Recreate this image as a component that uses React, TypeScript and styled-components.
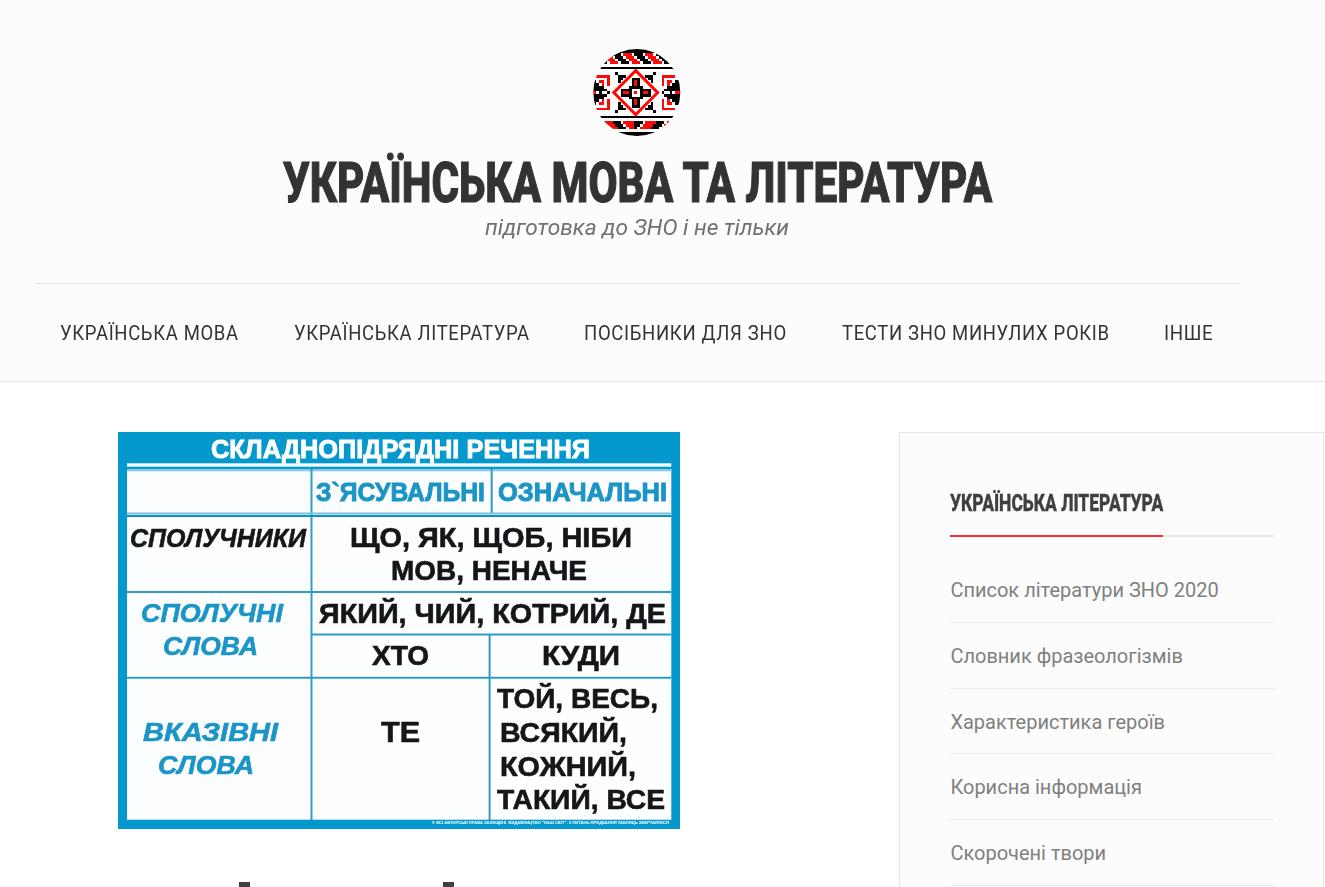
import React, { useLayoutEffect, useRef, useState } from 'react';
import styled, { createGlobalStyle } from 'styled-components';

const Global = createGlobalStyle`
  * { box-sizing: border-box; }
  body { margin: 0; background: #fff; font-family: Roboto, sans-serif; overflow: hidden; }
`;
const Page = styled.div`height: 887px; overflow: hidden;`;
const Header = styled.header`
  height: 382px; background: #fcfcfc; border-bottom: 1px solid #e6e6e6;
  padding: 49px 86px 0 35px;
`;
const Brand = styled.div`
  height: 234px; display: flex; flex-direction: column; align-items: center;
`;
const Emblem = styled.svg`display: block; width: 88px; height: 87px; flex: none;`;
const SiteTitle = styled.h1`
  margin: 15px 0 0; color: #333; font-size: 56px; line-height: 64px; font-weight: 800;
  -webkit-text-stroke: 1.2px #333;
`;
const Tagline = styled.p`
  margin: 0; font-size: 22.6px; line-height: 26px; font-style: italic; color: #707070;
`;
const Nav = styled.nav`
  border-top: 1px solid #e6e6e6; height: 98px; padding: 2px 25.5px 0 25px;
  display: flex; justify-content: space-between; align-items: center;
`;
const NavLink = styled.a`color: #333; font-size: 19.7px; line-height: 24px; letter-spacing: 0.7px;`;
const Columns = styled.main`
  display: flex; justify-content: space-between; align-items: flex-start;
  padding: 50px 1px 0 118px;
`;
const Article = styled.article`width: 562px;`;
const Poster = styled.svg`display: block; width: 562px; height: 397px;`;
const Accents = styled.div`
  display: flex; gap: 193px; padding: 53px 0 0 121px;
`;
const Accent = styled.span`width: 11px; height: 12px; background: #404040;`;
const Sidebar = styled.aside`
  width: 425px; height: 560px; padding: 50px; background: #fcfcfc; border: 1px solid #e6e6e6;
`;
const WidgetTitle = styled.h2`
  margin: 0 0 20.4px; height: 54px; border-bottom: 2px solid #e6e6e6; color: #404040;
  font-size: 23.5px; line-height: 40px; font-weight: 800; display: flex;
  -webkit-text-stroke: 0.4px #404040;
`;
const Underlined = styled.span`height: 54px; border-bottom: 2px solid #ff2d2d;`;
const List = styled.ul`list-style: none; margin: 0; padding: 0;`;
const Item = styled.li`
  height: 65.7px; line-height: 66px; font-size: 20px; color: #808080;
  border-bottom: 1px dotted #dcdcdc; padding-left: 0.4px;
`;
const FitBox = styled.span`display: block; white-space: nowrap;`;
const FitInner = styled.span`display: inline-block; transform-origin: 0 50%;`;

/* Condenses a line of text to a fixed measure. */
function Fit({ width, children }: { width: number; children: React.ReactNode }) {
  const ref = useRef<HTMLSpanElement>(null);
  const [scale, setScale] = useState(1);
  useLayoutEffect(() => {
    if (ref.current) setScale(width / ref.current.offsetWidth);
  }, [width]);
  return (
    <FitBox style={{ width }}>
      <FitInner ref={ref} style={{ transform: `scaleX(${scale})` }}>{children}</FitInner>
    </FitBox>
  );
}

const RED = '#ff0808';
const BLACK = '#000';
const mod = (n: number, m: number) => ((n % m) + m) % m;

/* Colour of one cross-stitch of the embroidery, counted from the centre. */
function stitch(x: number, y: number): string | null {
  const u = Math.abs(x);
  const v = Math.abs(y);
  if (v >= 15) return BLACK;
  if (y >= -14 && y <= -11) {
    const k = mod(x - (y + 14) + 8, 8);
    return k < 3 ? BLACK : k > 3 && k < 7 ? RED : null;
  }
  if (y >= 11 && y <= 13) {
    const r = y - 11;
    const k = mod(x + 4 + (x < 0 ? -r : r), 8);
    if (k < 4) return RED;
    return k < 7 ? BLACK : null;
  }
  if (v === 9) return BLACK;
  if (v > 8) return null;
  if (u === 0 && v === 0) return RED;
  if (u <= 1 && v <= 1) return null;
  if ((u === 0 && v >= 3 && v <= 4) || (v === 0 && u >= 3 && u <= 4)) return RED;
  if ((u <= 1 && v <= 5) || (v <= 1 && u <= 5)) return BLACK;
  if (u === 2 && v === 2) return BLACK;
  if (u === 7 && v === 7) return BLACK;
  if (u >= 4 && u <= 6 && v >= 4 && v <= 6 && u + v >= 10) return BLACK;
  if (u < 10 || v > 6) return null;
  if (v === 0) return u === 10 || u === 13 ? BLACK : u >= 15 ? RED : null;
  if (v === 6) return u <= 14 ? RED : null;
  if (u === 10 && v >= 3) return RED;
  if (v === 4 && u >= 12 && u <= 13) return RED;
  if (u === 12 && v === 3) return RED;
  if (v === 1 && u >= 11) return BLACK;
  if (v === 2 && u >= 12) return BLACK;
  if (v === 3 && u >= 14) return BLACK;
  if (v === 4 && u >= 15) return BLACK;
  return null;
}

function Embroidery() {
  const cells: React.ReactNode[] = [];
  const c = 2.72;
  for (let y = -17; y <= 17; y++)
    for (let x = -17; x <= 17; x++) {
      const fill = stitch(x, y);
      if (fill)
        cells.push(<rect key={`${x},${y}`} x={42.7 + (x - 0.5) * c} y={43.6 + (y - 0.5) * c} width={c} height={c} fill={fill} />);
    }
  return (
    <Emblem viewBox="0 0 88 87">
      <clipPath id="disc"><circle cx="43.8" cy="43.5" r="43.5" /></clipPath>
      <g clipPath="url(#disc)">
        <rect width="88" height="87" fill="#fff" />
        <g shapeRendering="crispEdges">{cells}</g>
        <path d="M42.7 21.6L64.7 43.6L42.7 65.6L20.7 43.6Z" fill="none" stroke={RED} strokeWidth="2.9" />
      </g>
    </Emblem>
  );
}

const INK = '#15151a';
const BLUE = '#1b94c6';
type Word = [string, number, number, number, number, string, boolean?];
/* text, left, right, baseline, size, colour, italic */
const words: Word[] = [
  ['СКЛАДНОПІДРЯДНІ РЕЧЕННЯ', 211, 590, 458, 25.5, '#fff'],
  ['З`ЯСУВАЛЬНІ', 316, 485, 501, 25.5, BLUE],
  ['ОЗНАЧАЛЬНІ', 498, 667, 501, 25.5, BLUE],
  ['СПОЛУЧНИКИ', 130, 306, 547, 26, INK, true],
  ['ЩО, ЯК, ЩОБ, НІБИ', 350, 632, 547, 27, INK],
  ['МОВ, НЕНАЧЕ', 391, 587, 580, 27, INK],
  ['СПОЛУЧНІ', 141, 283, 622, 26, BLUE, true],
  ['СЛОВА', 163, 258, 655, 26, BLUE, true],
  ['ЯКИЙ, ЧИЙ, КОТРИЙ, ДЕ', 319, 666, 622.5, 27, INK],
  ['ХТО', 372, 429, 665, 27, INK],
  ['КУДИ', 542, 620, 665, 27, INK],
  ['ВКАЗІВНІ', 143, 278, 741, 26, BLUE, true],
  ['СЛОВА', 158, 254, 774, 26, BLUE, true],
  ['ТЕ', 381, 420, 741.5, 29, INK],
  ['ТОЙ, ВЕСЬ,', 497, 658, 708, 27, INK],
  ['ВСЯКИЙ,', 500, 627, 741.5, 27, INK],
  ['КОЖНИЙ,', 500, 636, 775.5, 27, INK],
  ['ТАКИЙ, ВСЕ', 497, 665, 809, 27, INK],
  ['© ВСІ АВТОРСЬКІ ПРАВА ЗАХИЩЕНІ. ВИДАВНИЦТВО "НАШ СВІТ". З ПИТАНЬ ПРИДБАННЯ ТАБЛИЦЬ ЗВЕРТАЙТЕСЯ', 432, 669, 824, 4.4, '#d5eefa'],
];

function GrammarPoster() {
  return (
    <Poster viewBox="118 432 562 397">
      <rect x="118" y="432" width="562" height="397" fill="#0598cc" />
      <g style={{ filter: 'blur(0.35px)' }}>
        <rect x="127" y="463.3" width="544.3" height="3.4" fill="#f4fcff" />
        <rect x="127" y="469" width="544.3" height="350.7" fill="#fdfeff" />
        <rect x="127" y="469" width="544.3" height="2.3" fill="#8acbe5" />
        <g stroke="#2e9dc6" strokeWidth="2" fill="none">
          <path d="M311.5 469V820M491.7 469V514M489.6 634V820M127 592H671.3M312 634.5H671.3M127 677.7H671.3" />
          <path d="M127 516H671.3" stroke="#138fbe" />
          <path d="M127 513.6H671.3" stroke="#79bfdb" />
        </g>
        {words.map(([text, left, right, y, size, fill, italic], i) => (
          <text key={i} x={left} y={y} textLength={right - left} lengthAdjust="spacingAndGlyphs"
            fontFamily="Liberation Sans, sans-serif" fontWeight="700" fontSize={size} fill={fill}
            stroke={fill} strokeWidth={i < 3 ? 0.9 : size > 10 ? 0.6 : 0.15}
            fontStyle={italic ? 'italic' : 'normal'}>{text}</text>
        ))}
      </g>
    </Poster>
  );
}

const nav: [string, number][] = [
  ['УКРАЇНСЬКА МОВА', 178.5], ['УКРАЇНСЬКА ЛІТЕРАТУРА', 235.5], ['ПОСІБНИКИ ДЛЯ ЗНО', 202.5],
  ['ТЕСТИ ЗНО МИНУЛИХ РОКІВ', 267.5], ['ІНШЕ', 49.5],
];
const links = ['Список літератури ЗНО 2020', 'Словник фразеологізмів', 'Характеристика героїв', 'Корисна інформація', 'Скорочені твори'];

export default function App() {
  return (
    <Page>
      <Global />
      <Header>
        <Brand>
          <Embroidery />
          <SiteTitle><Fit width={709}>УКРАЇНСЬКА МОВА ТА ЛІТЕРАТУРА</Fit></SiteTitle>
          <Tagline><Fit width={304}>підготовка до ЗНО і не тільки</Fit></Tagline>
        </Brand>
        <Nav>{nav.map(([label, w]) => <NavLink key={label}><Fit width={w}>{label}</Fit></NavLink>)}</Nav>
      </Header>
      <Columns>
        <Article>
          <GrammarPoster />
          <Accents><Accent /><Accent /></Accents>
        </Article>
        <Sidebar>
          <WidgetTitle><Underlined><Fit width={213}>УКРАЇНСЬКА ЛІТЕРАТУРА</Fit></Underlined></WidgetTitle>
          <List>{links.map((l) => <Item key={l}>{l}</Item>)}</List>
        </Sidebar>
      </Columns>
    </Page>
  );
}
